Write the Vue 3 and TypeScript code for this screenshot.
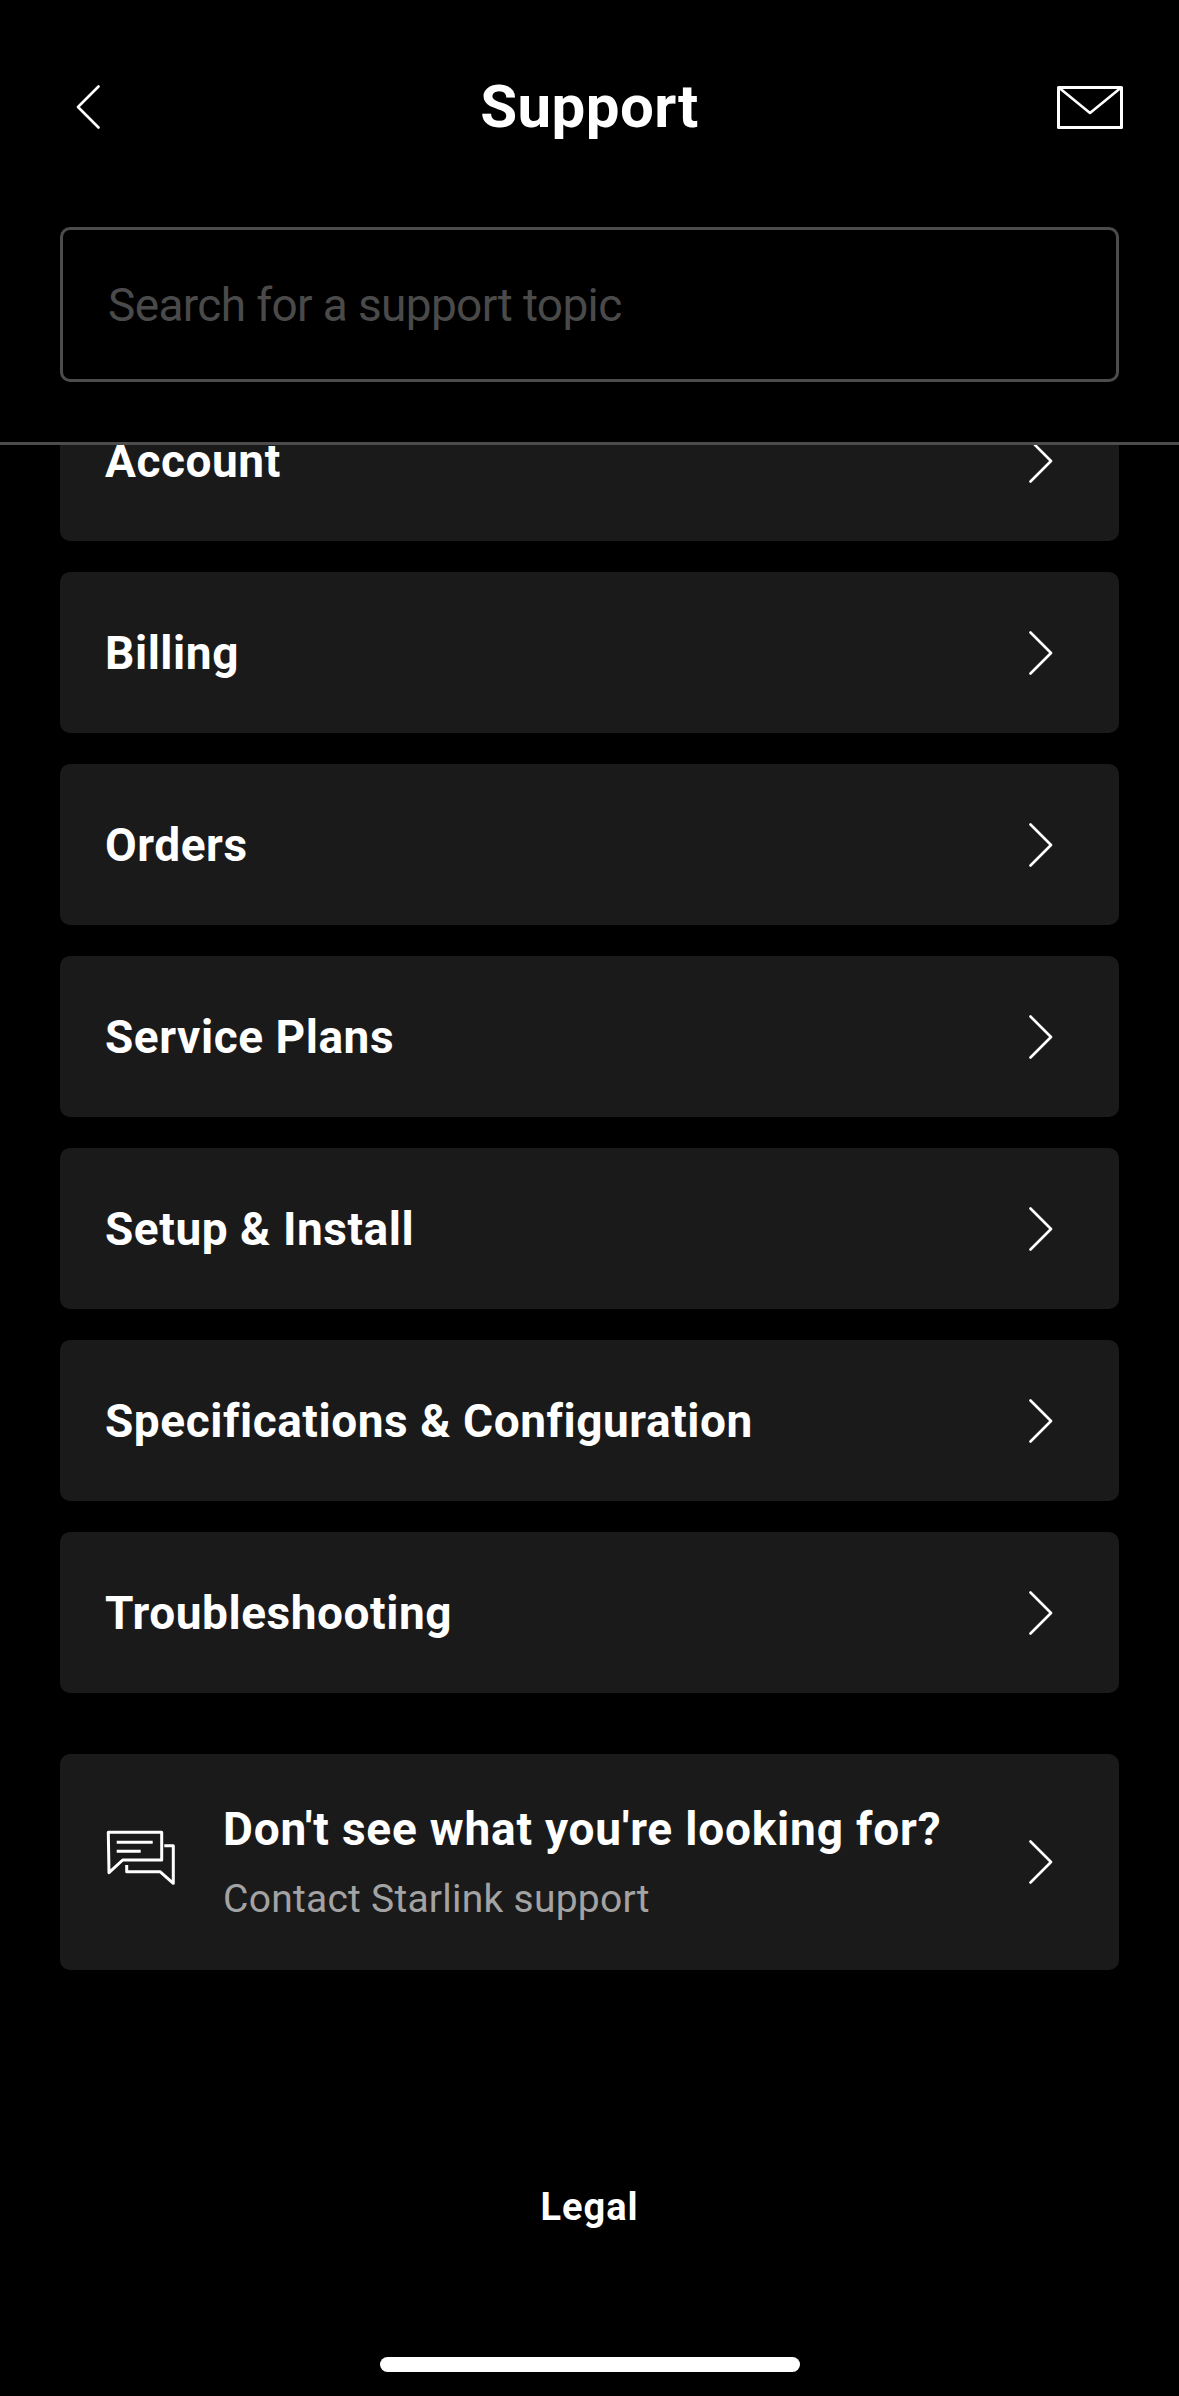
<script setup lang="ts">
const topics: string[] = [
  'Account',
  'Billing',
  'Orders',
  'Service Plans',
  'Setup & Install',
  'Specifications & Configuration',
  'Troubleshooting'
]
</script>

<template>
  <div class="page">
    <header class="header">
      <div class="topbar">
        <svg class="back" width="24" height="44" viewBox="0 0 24 44" fill="none">
          <path d="M22.5 1.5 2 22l20.5 20.5" stroke="#fff" stroke-width="2.6" stroke-linecap="round" stroke-linejoin="round" />
        </svg>
        <div class="title">Support</div>
        <svg class="mail" width="66" height="43" viewBox="0 0 66 43" fill="none">
          <path d="M1.5 1.5h63v40h-63z" stroke="#fff" stroke-width="3" stroke-linejoin="round" />
          <path d="M3 2.5 33 27 63 2.5" stroke="#fff" stroke-width="2.6" stroke-linejoin="round" />
        </svg>
      </div>
      <div class="search"><span>Search for a support topic</span></div>
    </header>

    <main class="scroller">
      <div class="list">
        <div v-for="topic in topics" :key="topic" class="card">
          <span class="card-label">{{ topic }}</span>
          <svg class="chevron" width="24" height="44" viewBox="0 0 24 44" fill="none">
            <path d="M1.5 1.5 22 22 1.5 42.5" stroke="#fff" stroke-width="2.6" stroke-linecap="round" stroke-linejoin="round" />
          </svg>
        </div>

        <div class="card contact">
          <svg class="chat" width="70" height="56" viewBox="0 0 70 56" fill="none">
            <path d="M2.3 2.3h53.4V30H16.7L3 42.7z" stroke="#fff" stroke-width="3" stroke-linejoin="round" />
            <path d="M10.7 12.3h36M10.7 21.3h24" stroke="#fff" stroke-width="3" />
            <path d="M58.3 15.7h9v37.6L54 41.7H20.7V35" stroke="#fff" stroke-width="3" stroke-linejoin="round" />
          </svg>
          <div class="contact-text">
            <div class="card-label">Don't see what you're looking for?</div>
            <div class="contact-sub">Contact Starlink support</div>
          </div>
          <svg class="chevron" width="24" height="44" viewBox="0 0 24 44" fill="none">
            <path d="M1.5 1.5 22 22 1.5 42.5" stroke="#fff" stroke-width="2.6" stroke-linecap="round" stroke-linejoin="round" />
          </svg>
        </div>

        <div class="legal">Legal</div>
      </div>
    </main>

    <div class="home-bar"></div>
  </div>
</template>

<style>
html,
body {
  margin: 0;
  background: #000;
}
</style>

<style scoped>
.page {
  width: 1179px;
  height: 2396px;
  display: flex;
  flex-direction: column;
  background: #000;
  color: #fff;
  font-family: Roboto, 'Liberation Sans', sans-serif;
  overflow: hidden;
}
.header {
  flex: none;
  height: 442px;
  padding: 0 60px;
  border-bottom: 3px solid #4c4c4c;
}
.topbar {
  height: 227px;
  position: relative;
  display: flex;
  justify-content: center;
}
.back {
  position: absolute;
  left: 16px;
  top: 85px;
}
.mail {
  position: absolute;
  left: 997px;
  top: 86px;
}
.title {
  margin-top: 69px;
  font-size: 60px;
  line-height: 76px;
  font-weight: 700;
  letter-spacing: 0.4px;
}
.search {
  height: 155px;
  box-sizing: border-box;
  border: 3px solid #4c4c4c;
  border-radius: 10px;
  padding-left: 45px;
  display: flex;
  align-items: center;
  font-size: 46px;
  letter-spacing: -0.65px;
  color: #4a4a4a;
}
.scroller {
  flex: 1;
  overflow: hidden;
  min-height: 0;
}
.list {
  margin-top: -65px;
  padding: 0 60px;
  display: flex;
  flex-direction: column;
  gap: 31px;
}
.card {
  height: 161px;
  flex: none;
  background: #1a1a1a;
  border-radius: 10px;
  padding: 0 66px 0 45px;
  display: flex;
  align-items: center;
  justify-content: space-between;
}
.card-label {
  font-size: 46px;
  font-weight: 700;
  letter-spacing: 0.55px;
  white-space: nowrap;
}
.contact {
  height: 216px;
  margin-top: 30px;
  justify-content: flex-start;
  padding-left: 46px;
}
.contact .card-label {
  letter-spacing: 0.8px;
}
.chat {
  flex: none;
  margin-bottom: 8px;
}
.contact-text {
  flex: 1;
  margin-left: 47px;
  display: flex;
  flex-direction: column;
  gap: 20px;
}
.contact-sub {
  font-size: 39px;
  letter-spacing: 0.25px;
  color: #a3a3a3;
}
.legal {
  margin-top: 184px;
  text-align: center;
  font-size: 38px;
  font-weight: 700;
  letter-spacing: 1px;
}
.home-bar {
  flex: none;
  width: 420px;
  height: 15px;
  margin: 0 auto 24px;
  background: #fff;
  border-radius: 8px;
}
</style>
